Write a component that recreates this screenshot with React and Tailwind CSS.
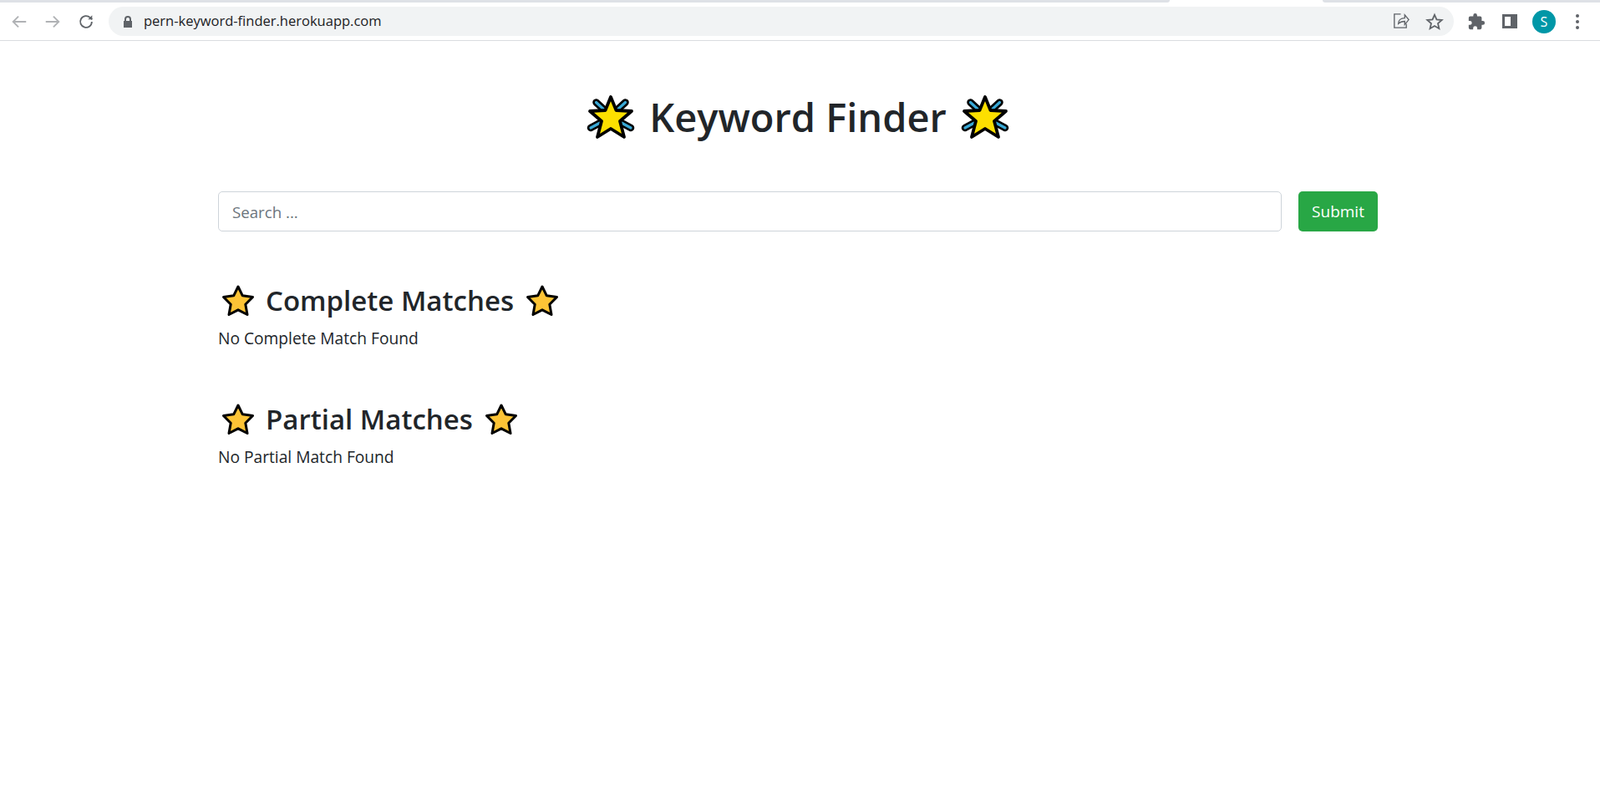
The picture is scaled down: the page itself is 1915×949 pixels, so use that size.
import React from 'react';

const font = "font-['Open_Sans','Noto_Sans',sans-serif]";

// Star with spark lines, used either side of the page title
const SparkStar = () => (
  <svg width="58" height="58" viewBox="0 0 58 58" className="shrink-0">
    <g strokeLinecap="round">
      <path d="M11.500 11.500 L24 23 M46.500 11.500 L34 23 M5 42 L18 35 M53 42 L40 35" stroke="#000" strokeWidth="8.500" />
      <path d="M11.500 11.500 L24 23 M46.500 11.500 L34 23 M5 42 L18 35 M53 42 L40 35" stroke="#3aa9d6" strokeWidth="3.200" />
    </g>
    <path
      d="M29 5 L35.500 21 L54 22 L40 34 L45 53 L29 43 L13 53 L18 34 L4 22 L22.500 21 Z"
      fill="#fcdf00"
      stroke="#000"
      strokeWidth="3.800"
      strokeLinejoin="round"
    />
  </svg>
);

const Star = () => (
  <svg width="42" height="42" viewBox="0 0 42 42" className="shrink-0">
    <path
      d="M21 4 L26.300 14.800 L38.500 16.500 L29.800 25.200 L32 37.500 L21 31.800 L10 37.500 L12.200 25.200 L3.500 16.500 L15.700 14.800 Z"
      fill="#fdc436"
      stroke="#000"
      strokeWidth="3"
      strokeLinejoin="round"
    />
  </svg>
);

const Section = ({ title, text }) => (
  <div className="mb-[52px]">
    <div className="flex items-center h-[60px]">
      <div className="ml-[3px] mr-[12px] flex"><Star /></div>
      <h2 className="text-[33px] font-semibold leading-[60px] text-[#212529]">{title}</h2>
      <div className="ml-[13px] flex"><Star /></div>
    </div>
    <p className="text-[19.200px] leading-[30px] text-[#212529]">{text}</p>
  </div>
);

const Toolbar = () => (
  <div>
    <div className="flex h-[8px] bg-white">
      <div className="w-[1400px] h-[3px] bg-[#dee1e6] rounded-br-lg" />
      <div className="w-[183px]" />
      <div className="flex-1 h-[3px] bg-[#dee1e6] rounded-bl-lg" />
    </div>
    <div className="flex items-center h-[41px] pb-[5px] border-b border-[#dadce0] bg-white">
      <div className="flex items-center w-[130px] pl-[12px] gap-[18px] text-[#b0b2b5]">
        <svg width="22" height="22" viewBox="0 0 24 24" fill="none" stroke="currentColor" strokeWidth="2"><path d="M21 12H4M11 5l-7 7 7 7" /></svg>
        <svg width="22" height="22" viewBox="0 0 24 24" fill="none" stroke="currentColor" strokeWidth="2"><path d="M3 12h17M13 5l7 7-7 7" /></svg>
        <svg width="22" height="22" viewBox="0 0 24 24" fill="none" stroke="#5f6368" strokeWidth="2"><path d="M19.500 12a7.500 7.500 0 1 1-2.200-5.300L20 9" /><path d="M20 3.500V9h-5.500" fill="#5f6368" stroke="none" /></svg>
      </div>
      <div className="flex items-center w-[1610px] h-[35px] rounded-full bg-[#f1f3f4] pl-[16px] pr-[12px]">
        <svg width="14" height="16" viewBox="0 0 14 16" className="shrink-0"><path d="M3 7V5a4 4 0 0 1 8 0v2h1v8H2V7zm2 0h4V5a2 2 0 0 0-4 0z" fill="#5f6368" /></svg>
        <span className={`ml-[12px] text-[16.500px] text-[#202124] ${font}`}>pern-keyword-finder.herokuapp.com</span>
        <div className="ml-auto flex items-center gap-[18px]">
          <svg width="23" height="23" viewBox="0 0 24 24" fill="none" stroke="#5f6368" strokeWidth="1.400"><path d="M12 3H4v17h15v-5" /><path d="M9 15c0-4 3-7 8-7V4l5 6-5 6v-4c-4 0-6 1-8 3z" /></svg>
          <svg width="22" height="22" viewBox="0 0 24 24" fill="none" stroke="#5f6368" strokeWidth="2"><path d="M12 3l2.700 6.200 6.800.6-5.100 4.500 1.500 6.700-5.900-3.500-5.900 3.500 1.500-6.700-5.100-4.500 6.800-.6z" /></svg>
        </div>
      </div>
      <div className="flex items-center ml-[16px]">
        <svg width="22" height="22" viewBox="0 0 24 24" fill="#5f6368"><path d="M20.500 11H19V7a2 2 0 0 0-2-2h-4V3.500a2.500 2.500 0 0 0-5 0V5H4a2 2 0 0 0-2 2v3.800h1.500a2.700 2.700 0 0 1 0 5.400H2V20a2 2 0 0 0 2 2h3.800v-1.500a2.700 2.700 0 0 1 5.400 0V22H17a2 2 0 0 0 2-2v-4h1.500a2.500 2.500 0 0 0 0-5z" /></svg>
        <div className="w-[18px] h-[17px] ml-[20px] border-[3px] border-r-[8px] border-[#5f6368]" />
        <div className={`w-[28px] h-[28px] ml-[18px] rounded-full bg-[#0097a7] text-white text-[16px] flex items-center justify-center ${font}`}>S</div>
        <div className="flex flex-col gap-[3px] ml-[24px]">
          <div className="w-[4px] h-[4px] rounded-full bg-[#5f6368]" />
          <div className="w-[4px] h-[4px] rounded-full bg-[#5f6368]" />
          <div className="w-[4px] h-[4px] rounded-full bg-[#5f6368]" />
        </div>
      </div>
    </div>
  </div>
);

const App = () => {
  return (
    <div className={`min-h-[949px] bg-white ${font}`}>
      <Toolbar />
      <div className="ml-[261px] w-[1388px]">
        <div className="flex items-center justify-center gap-[17px] pt-[42px] h-[140px]">
          <SparkStar />
          <h1 className="text-[47px] font-semibold leading-[70px] text-[#212529]">Keyword Finder</h1>
          <SparkStar />
        </div>
        <div className="flex gap-[20px] mt-[40px]">
          <input
            type="text"
            placeholder="Search ..."
            className="flex-1 h-[48px] rounded-[5px] border border-[#ced4da] px-[16px] text-[18.700px] text-[#495057] placeholder:text-[#6c757d] outline-none"
          />
          <button className="w-[95px] h-[48px] rounded-[5px] bg-[#28a745] text-white text-[19px]">Submit</button>
        </div>
        <div className="mt-[53px]">
          <Section title="Complete Matches" text="No Complete Match Found" />
          <Section title="Partial Matches" text="No Partial Match Found" />
        </div>
      </div>
    </div>
  );
};

export default App;
